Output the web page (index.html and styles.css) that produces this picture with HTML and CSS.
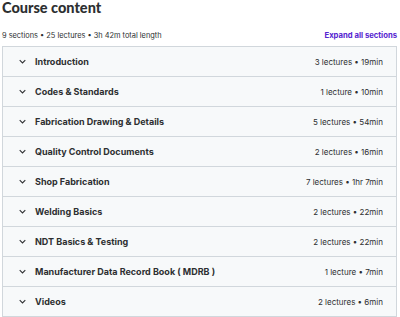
FILE: index.html
```html
<!DOCTYPE html>
<html lang="en">
<head>
    <meta charset="UTF-8">
    <title>Course content</title>
    <link rel="stylesheet" href="styles.css">
</head>
<body>
    <div class="curriculum">
        <h2 class="title">Course content</h2>

        <div class="summary">
            <span>9 sections • 25 lectures • 3h 42m total length</span>
            <button class="expand">Expand all sections</button>
        </div>

        <div class="sections">
            <div class="section">
                <span class="chevron"><svg viewBox="0 0 10 6" width="7" height="5"><path d="M1 1l4 4 4-4" fill="none" stroke="#2d2f31" stroke-width="1.5"/></svg></span>
                <span class="name">Introduction</span>
                <span class="meta">3 lectures • 19min</span>
            </div>
            <div class="section">
                <span class="chevron"><svg viewBox="0 0 10 6" width="7" height="5"><path d="M1 1l4 4 4-4" fill="none" stroke="#2d2f31" stroke-width="1.5"/></svg></span>
                <span class="name">Codes &amp; Standards</span>
                <span class="meta">1 lecture • 10min</span>
            </div>
            <div class="section">
                <span class="chevron"><svg viewBox="0 0 10 6" width="7" height="5"><path d="M1 1l4 4 4-4" fill="none" stroke="#2d2f31" stroke-width="1.5"/></svg></span>
                <span class="name">Fabrication Drawing &amp; Details</span>
                <span class="meta">5 lectures • 54min</span>
            </div>
            <div class="section">
                <span class="chevron"><svg viewBox="0 0 10 6" width="7" height="5"><path d="M1 1l4 4 4-4" fill="none" stroke="#2d2f31" stroke-width="1.5"/></svg></span>
                <span class="name">Quality Control Documents</span>
                <span class="meta">2 lectures • 16min</span>
            </div>
            <div class="section">
                <span class="chevron"><svg viewBox="0 0 10 6" width="7" height="5"><path d="M1 1l4 4 4-4" fill="none" stroke="#2d2f31" stroke-width="1.5"/></svg></span>
                <span class="name">Shop Fabrication</span>
                <span class="meta">7 lectures • 1hr 7min</span>
            </div>
            <div class="section">
                <span class="chevron"><svg viewBox="0 0 10 6" width="7" height="5"><path d="M1 1l4 4 4-4" fill="none" stroke="#2d2f31" stroke-width="1.5"/></svg></span>
                <span class="name">Welding Basics</span>
                <span class="meta">2 lectures • 22min</span>
            </div>
            <div class="section">
                <span class="chevron"><svg viewBox="0 0 10 6" width="7" height="5"><path d="M1 1l4 4 4-4" fill="none" stroke="#2d2f31" stroke-width="1.5"/></svg></span>
                <span class="name">NDT Basics &amp; Testing</span>
                <span class="meta">2 lectures • 22min</span>
            </div>
            <div class="section">
                <span class="chevron"><svg viewBox="0 0 10 6" width="7" height="5"><path d="M1 1l4 4 4-4" fill="none" stroke="#2d2f31" stroke-width="1.5"/></svg></span>
                <span class="name">Manufacturer Data Record Book ( MDRB )</span>
                <span class="meta">1 lecture • 7min</span>
            </div>
            <div class="section">
                <span class="chevron"><svg viewBox="0 0 10 6" width="7" height="5"><path d="M1 1l4 4 4-4" fill="none" stroke="#2d2f31" stroke-width="1.5"/></svg></span>
                <span class="name">Videos</span>
                <span class="meta">2 lectures • 6min</span>
            </div>
        </div>
    </div>
</body>
</html>
```

FILE: styles.css
```css
body {
    font-family: Inter, "Noto Sans", sans-serif;
    margin: 0;
    padding: 0;
    background-color: #fff;
    color: #2d2f31;
}

.curriculum {
    padding: 0 3px 0 2px;
}

.title {
    margin: 0;
    font-family: Lato, Inter, sans-serif;
    font-size: 14.5px;
    font-weight: 900;
    line-height: 15px;
}

.summary {
    display: flex;
    justify-content: space-between;
    align-items: center;
    margin-top: 13px;
    height: 14px;
    font-size: 7.4px;
}

.expand {
    background: none;
    border: none;
    padding: 0;
    font-family: inherit;
    font-size: 7.7px;
    font-weight: 700;
    color: #5624d0;
    cursor: pointer;
}

.sections {
    margin-top: 4px;
    border: 1px solid #d1d7dc;
}

.section {
    display: flex;
    align-items: center;
    height: 29px;
    padding: 0 13px 0 16px;
    background-color: #f7f9fa;
    border-bottom: 1px solid #d1d7dc;
}

.section:last-child {
    border-bottom: none;
}

.chevron {
    display: flex;
    width: 7px;
    margin-right: 9px;
}

.name {
    flex: 1;
    font-size: 9px;
    font-weight: 700;
}

.meta {
    font-size: 8px;
}
```
